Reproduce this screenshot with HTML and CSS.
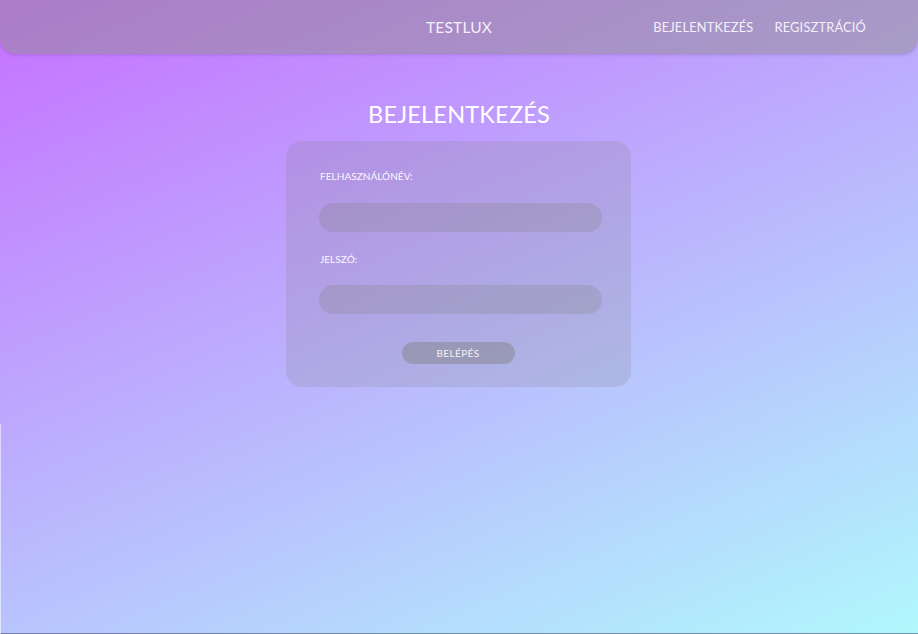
FILE: index.html
```html
<!DOCTYPE html>
<html lang="hu">
<head>
<meta charset="utf-8">
<title>TESTLUX</title>
<link rel="stylesheet" href="styles.css">
</head>
<body>
<div class="page">
  <header class="topbar">
    <div class="topbar-side"></div>
    <div class="brand">TESTLUX</div>
    <nav class="nav">
      <a class="nav-link" href="#">BEJELENTKEZÉS</a>
      <a class="nav-link" href="#">REGISZTRÁCIÓ</a>
    </nav>
  </header>
  <main class="main">
    <h1 class="title">BEJELENTKEZÉS</h1>
    <form class="card">
      <label class="field-label" for="user">FELHASZNÁLÓNÉV:</label>
      <input class="field-input" id="user" type="text">
      <label class="field-label" for="pass">JELSZÓ:</label>
      <input class="field-input field-input-last" id="pass" type="password">
      <div class="actions">
        <button class="btn" type="button">BELÉPÉS</button>
      </div>
    </form>
  </main>
</div>
</body>
</html>
```
FILE: styles.css
```css
* { box-sizing: border-box; }
html, body { margin: 0; padding: 0; }
body {
  font-family: "Lato", "Open Sans", sans-serif;
  color: #fff;
  background: linear-gradient(157deg, #c670ff 0%, #b0f8fc 100%);
  min-height: 634px;
}
body::after {
  content: "";
  position: fixed;
  left: 0;
  top: 424px;
  bottom: 0;
  width: 1px;
  background: rgba(255,255,255,0.55);
}
.page {
  min-height: 634px;
  border-bottom: 1px solid rgba(70,80,110,0.6);
}
.topbar {
  height: 54px;
  display: grid;
  grid-template-columns: 1fr auto 1fr;
  align-items: center;
  background: rgba(140,140,132,0.45);
  border-radius: 0 0 16px 16px;
  box-shadow: 0 1px 3px rgba(90,60,140,0.25);
}
.brand {
  font-size: 15.5px;
  letter-spacing: 0.2px;
  color: #f4f0fa;
}
.nav {
  display: flex;
  justify-content: flex-end;
  gap: 21px;
  padding-right: 52px;
}
.nav-link {
  color: #f4f0fa;
  text-decoration: none;
  font-size: 12.8px;
  letter-spacing: 0.2px;
}
.main {
  display: flex;
  flex-direction: column;
  align-items: center;
}
.title {
  margin: 44px 0 11px;
  font-weight: 400;
  font-size: 23.5px;
  line-height: 32px;
  letter-spacing: 0.2px;
  color: #fff;
}
.card {
  width: 345px;
  margin-right: 1px;
  background: rgba(128,128,128,0.2);
  border-radius: 16px;
  padding: 28px 28px 23px 33px;
  display: flex;
  flex-direction: column;
}
.field-label {
  font-size: 10px;
  line-height: 14px;
  letter-spacing: 0.05px;
  margin-left: 1px;
  color: #fbf8ff;
}
.field-input {
  width: 283px;
  height: 29px;
  border: none;
  border-radius: 15px;
  background: rgba(128,128,128,0.25);
  margin: 20px 0 20px;
  outline: none;
}
.field-input-last { margin-top: 19px; margin-bottom: 28px; }
.actions {
  display: flex;
  justify-content: center;
  padding-right: 6px;
}
.btn {
  width: 113px;
  height: 22px;
  border: none;
  border-radius: 11px;
  background: rgba(128,128,128,0.45);
  color: #f2f0f6;
  font-family: "Lato", "Open Sans", sans-serif;
  font-size: 10px;
  letter-spacing: 0.4px;
  padding: 0;
}
```
